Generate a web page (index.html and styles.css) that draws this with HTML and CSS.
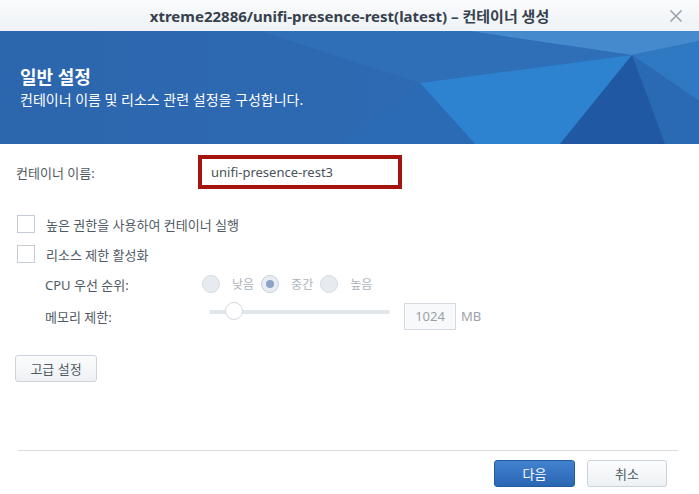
FILE: index.html
```html
<!DOCTYPE html>
<html lang="ko">
<head>
  <meta charset="UTF-8">
  <title>컨테이너 생성</title>
  <link rel="stylesheet" href="styles.css">
</head>
<body>
  <div class="dialog">
    <div class="titlebar">
      <span class="title">xtreme22886/unifi-presence-rest(latest) – 컨테이너 생성</span>
      <span class="close">
        <svg width="14" height="14" viewBox="0 0 14 14"><path d="M1.5 1.5 L12.5 12.5 M12.5 1.5 L1.5 12.5" stroke="#9aa2aa" stroke-width="1.6" fill="none"/></svg>
      </span>
    </div>

    <div class="banner">
      <svg class="facets" width="699" height="113" viewBox="0 0 699 113" preserveAspectRatio="none">
        <polygon points="260,0 470,0 632,24 420,52" fill="#2f6fb8"/>
        <polygon points="470,0 699,0 699,10 632,24" fill="#468ace"/>
        <polygon points="632,24 699,10 699,70" fill="#2f78c2"/>
        <polygon points="632,24 699,70 699,113 665,113" fill="#2a69b3"/>
        <polygon points="632,24 420,52 475,113 560,113" fill="#2d83d0"/>
        <polygon points="340,113 420,52 475,113" fill="#2b6bb5"/>
        <polygon points="632,24 560,113 665,113" fill="#2058a3"/>
      </svg>
      <div class="banner-text">
        <h1>일반 설정</h1>
        <p>컨테이너 이름 및 리소스 관련 설정을 구성합니다.</p>
      </div>
    </div>

    <div class="content">
      <div class="row name-row">
        <label class="field-label">컨테이너 이름:</label>
        <div class="name-input">unifi-presence-rest3</div>
      </div>

      <div class="row check-row">
        <span class="checkbox"></span>
        <span>높은 권한을 사용하여 컨테이너 실행</span>
      </div>
      <div class="row check-row">
        <span class="checkbox"></span>
        <span>리소스 제한 활성화</span>
      </div>

      <div class="row sub-row">
        <span class="sub-label">CPU 우선 순위:</span>
        <div class="radios">
          <span class="radio"></span><span class="radio-text">낮음</span>
          <span class="radio checked"></span><span class="radio-text">중간</span>
          <span class="radio"></span><span class="radio-text">높음</span>
        </div>
      </div>
      <div class="row sub-row mem-row">
        <span class="sub-label">메모리 제한:</span>
        <div class="slider"><span class="knob"></span></div>
        <div class="num-box">1024</div>
        <span class="unit">MB</span>
      </div>

      <button class="btn adv-btn">고급 설정</button>
    </div>

    <div class="footer">
      <div class="footer-buttons">
        <button class="btn primary">다음</button>
        <button class="btn">취소</button>
      </div>
    </div>
  </div>
</body>
</html>
```

FILE: styles.css
```css
body {
  margin: 0;
  font-family: "Noto Sans", "Noto Sans CJK KR", sans-serif;
  font-size: 13px;
  color: #505a64;
  background: #fff;
}

.dialog {
  width: 699px;
  height: 494px;
  display: flex;
  flex-direction: column;
  background: #fff;
  overflow: hidden;
}

.titlebar {
  height: 31px;
  flex: none;
  display: flex;
  align-items: center;
  justify-content: center;
  position: relative;
  background: linear-gradient(#fafbfc, #eef2f6);
}

.title {
  font-size: 15px;
  font-weight: bold;
  color: #37414d;
}

.close {
  position: absolute;
  right: 16px;
  top: 9px;
  line-height: 0;
}

.banner {
  height: 113px;
  flex: none;
  position: relative;
  background: linear-gradient(90deg, #2c66ad, #2d6ab3 60%, #2c6db7);
  overflow: hidden;
}

.facets {
  position: absolute;
  left: 0;
  top: 0;
}

.banner-text {
  position: relative;
  padding: 33px 0 0 20px;
  color: #fff;
}

.banner-text h1 {
  margin: 0;
  font-size: 18px;
  font-weight: bold;
  line-height: 26px;
}

.banner-text p {
  margin: 0;
  font-size: 14px;
  line-height: 20px;
}

.content {
  flex: 1;
  padding: 11px 0 0 16px;
}

.row {
  display: flex;
  align-items: center;
}

.name-row {
  height: 34px;
  margin-bottom: 20px;
}

.field-label {
  width: 182px;
}

.name-input {
  width: 187px;
  height: 26px;
  line-height: 26px;
  padding-left: 9px;
  border: 4px solid #a3150e;
  color: #4a525a;
  font-size: 13px;
}

.check-row {
  height: 30px;
  gap: 11px;
}

.checkbox {
  width: 16px;
  height: 16px;
  border: 1px solid #c5ccd3;
  background: #fff;
  margin-left: 1px;
}

.sub-row {
  height: 30px;
  padding-left: 29px;
}

.sub-label {
  width: 157px;
}

.radios {
  display: flex;
  align-items: center;
}

.radio {
  width: 16px;
  height: 16px;
  border-radius: 50%;
  border: 1px solid #d6dce2;
  background: #e7ebef;
  display: flex;
  align-items: center;
  justify-content: center;
}

.radio.checked {
  background: #e9eef4;
  border-color: #c5d1df;
}

.radio.checked::after {
  content: "";
  width: 8px;
  height: 8px;
  border-radius: 50%;
  background: #8aa3c6;
}

.radio-text {
  color: #aab2ba;
  font-size: 12px;
  margin: 0 7px 0 12px;
}

.mem-row {
  margin-top: 2px;
}

.slider {
  width: 181px;
  height: 4px;
  margin: -8px 0 0 7px;
  background: #e1e6ea;
  border-radius: 2px;
  position: relative;
}

.knob {
  position: absolute;
  left: 16px;
  top: -8px;
  width: 18px;
  height: 18px;
  border-radius: 50%;
  border: 1px solid #d3d9df;
  background: #fff;
  box-sizing: border-box;
}

.num-box {
  width: 50px;
  height: 25px;
  margin-left: 14px;
  border: 1px solid #d4dae0;
  background: #f8f9fa;
  color: #9aa1a8;
  text-align: center;
  line-height: 25px;
}

.unit {
  margin-left: 5px;
  color: #9aa1a8;
}

.btn {
  font-family: inherit;
  font-size: 13px;
  color: #505a64;
  height: 27px;
  border: 1px solid #ccd3da;
  border-radius: 3px;
  background: linear-gradient(#fbfcfd, #eef1f4);
  padding: 0;
}

.adv-btn {
  width: 82px;
  margin: 24px 0 0 -1px;
}

.footer {
  flex: none;
  margin: 0 21px 0 18px;
  border-top: 1px solid #d9dfe4;
  padding: 9px 0 7px;
}

.footer-buttons {
  display: flex;
  justify-content: flex-end;
  gap: 12px;
  margin-right: 11px;
}

.footer-buttons .btn {
  width: 80px;
}

.btn.primary {
  width: 81px;
  color: #fff;
  border-color: #2259a3;
  background: linear-gradient(#4182cf, #2a66b4);
}
```
